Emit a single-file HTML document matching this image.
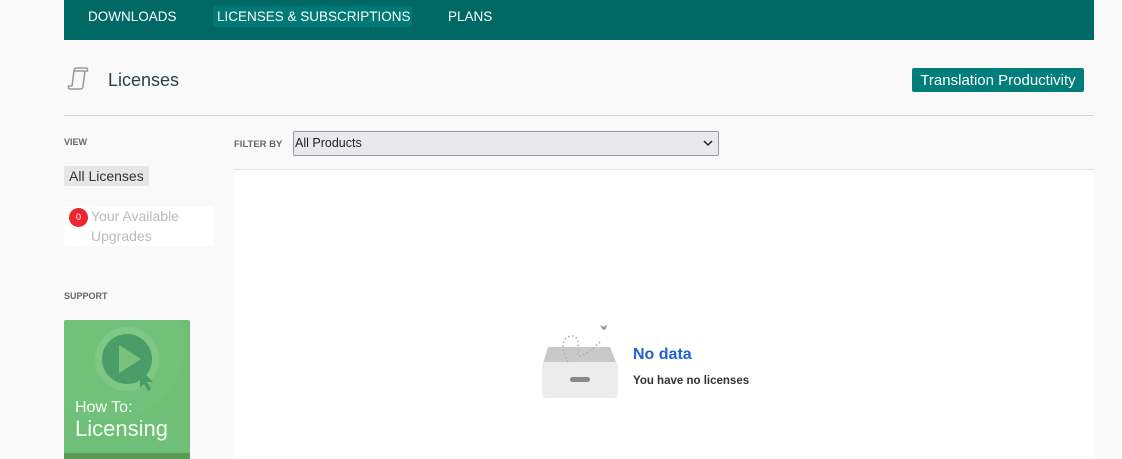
<!DOCTYPE html>
<html><head><style>
body{margin:0;width:1122px;height:459px;background:#f9f9f9;font-family:"Liberation Sans",sans-serif;position:relative;overflow:hidden}
.a{position:absolute}
</style></head><body>
<div class="a" style="left:64px;top:0;width:1030px;height:40px;background:#006966"></div>
<div class="a" style="left:88px;top:9px;color:#fff;font-size:13.5px">DOWNLOADS</div>
<div class="a" style="left:213px;top:6px;width:199px;height:21px;background:#017a77;border-radius:2px"></div>
<div class="a" style="left:217px;top:9px;color:#fff;font-size:13.5px">LICENSES &amp; SUBSCRIPTIONS</div>
<div class="a" style="left:448px;top:9px;color:#fff;font-size:13.5px">PLANS</div>
<svg class="a" style="left:64px;top:64px" width="30" height="30" viewBox="0 0 30 30"><path d="M8 22 L10 7 Q10 4 13 4 L22 4 Q24 4 23.5 7 L21 7 L19 22 Q19 25 16 25 L6 25 Q4 25 4.5 22 Z M10 7 L22 7" fill="none" stroke="#999" stroke-width="1.5"/></svg>
<div class="a" style="left:108px;top:70px;font-size:18px;color:#2c3e50">Licenses</div>
<div class="a" style="left:912px;top:68px;width:172px;height:24px;background:#017d7a;border-radius:2px;color:#fff;font-size:15px;line-height:25px;text-align:center">Translation Productivity</div>
<div class="a" style="left:64px;top:115px;width:1030px;height:1px;background:#d6d6d6"></div>
<div class="a" style="left:64px;top:137px;font-size:9px;font-weight:bold;color:#666">VIEW</div>
<div class="a" style="left:64px;top:166px;width:85px;height:20px;background:#e6e6e6;border-radius:2px;font-size:14px;line-height:20px;color:#333;text-indent:5px">All Licenses</div>
<div class="a" style="left:64px;top:206px;width:150px;height:40px;background:#fff"></div>
<div class="a" style="left:69px;top:208px;width:19px;height:19px;border-radius:50%;background:#f0242e;color:#fff;font-size:9px;line-height:19px;text-align:center">0</div>
<div class="a" style="left:91px;top:206px;font-size:14px;line-height:20px;color:#bbb">Your Available<br>Upgrades</div>
<div class="a" style="left:64px;top:291px;font-size:9px;font-weight:bold;color:#666">SUPPORT</div>
<div class="a" style="left:64px;top:320px;width:126px;height:139px;background:#6fbf78;overflow:hidden;border-radius:2px 2px 0 0">
<div class="a" style="left:-30px;top:-50px;width:150px;height:150px;border-radius:50%;background:#72c17a"></div>
<div class="a" style="left:31px;top:7px;width:64px;height:64px;border-radius:50%;background:#7ec883"></div>
<div class="a" style="left:38px;top:14px;width:50px;height:50px;border-radius:50%;background:#4a9d68"></div>
<svg class="a" style="left:0;top:0" width="126" height="100"><polygon points="55,25 55,53 77,39" fill="#78c27c"/><polygon points="76,49 76,68 80,64 84,71 87,69 83,62 89,62" fill="#4a9d68"/></svg>
<div class="a" style="left:11px;top:79px;font-size:16px;color:#f0fff0">How To:</div>
<div class="a" style="left:11px;top:96px;font-size:22px;color:#f0fff0">Licensing</div>
<div class="a" style="left:0;top:133px;width:126px;height:6px;background:#5a9b52"></div>
</div>
<div class="a" style="left:234px;top:139px;font-size:9.5px;font-weight:bold;color:#666">FILTER BY</div>
<div class="a" style="left:293px;top:131px;width:424px;height:23px;background:#e9e8ed;border:1px solid #999;border-radius:2px;font-size:12.5px;line-height:23px;color:#222;text-indent:1px">All Products<svg style="position:absolute;right:5px;top:8px" width="10" height="7"><path d="M1 1 L5 5 L9 1" fill="none" stroke="#222" stroke-width="1.5"/></svg></div>
<div class="a" style="left:234px;top:169px;width:860px;height:1px;background:#e0e0e0"></div>
<div class="a" style="left:234px;top:170px;width:860px;height:289px;background:#fff"></div>
<svg class="a" style="left:540px;top:322px" width="80" height="82" viewBox="0 0 80 82"><path d="M8 25 L70 25 L78 45 L2 45 Z" fill="#c9c9c9"/><rect x="2" y="40" width="76" height="36" rx="4" fill="#ececec"/><rect x="30" y="55" width="20" height="5" rx="2.5" fill="#8a8a8a"/><path d="M28 40 Q18 20 28 15 Q40 10 38 30 Q36 42 60 20" fill="none" stroke="#aaa" stroke-width="1.5" stroke-dasharray="1.5 2.5"/><path d="M63 8 L60 3 L64 5 L67 2 L66 7 Z" fill="#999"/></svg>
<div class="a" style="left:633px;top:346px;font-size:16px;font-weight:bold;color:#2164d1">No data</div>
<div class="a" style="left:633px;top:375px;font-size:11.5px;font-weight:bold;color:#333">You have no licenses</div>
</body></html>
